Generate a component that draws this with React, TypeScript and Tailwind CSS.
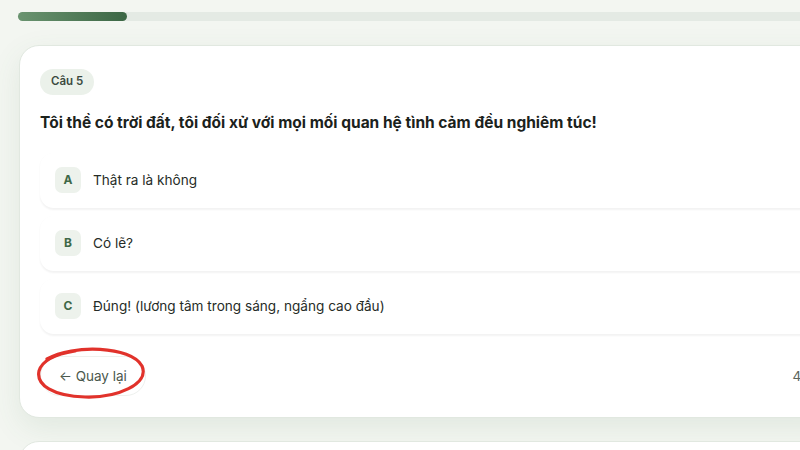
import React from "react";

const options = [
  { k: "A", t: "Thật ra là không" },
  { k: "B", t: "Có lẽ?" },
  { k: "C", t: "Đúng! (lương tâm trong sáng, ngẩng cao đầu)" },
];

export default function App() {
  return (
    <div
      className="relative w-[800px] h-[450px] overflow-hidden bg-[#f3f6f1]"
      style={{ fontFamily: "Inter, 'Noto Sans', 'Liberation Sans', sans-serif" }}
    >
      <div className="pl-[18px] pt-[12px]">
        <div className="h-[9px] w-[900px] rounded-full bg-[#e4eae4]">
          <div className="h-full w-[109px] rounded-full bg-gradient-to-r from-[#6a9470] to-[#3c6745]" />
        </div>
      </div>

      <div className="ml-[19px] mt-[24px] w-[822px] rounded-[20px] border border-[#e1e8e0] bg-white pt-[21px] px-[20px] pb-[21px] shadow-[0_10px_30px_rgba(70,120,80,0.1)]">
        <div className="inline-flex h-[26px] items-center rounded-full bg-[#ebf1ea] px-[11px] text-[11.5px] font-semibold text-[#3b4a3f]">
          Câu 5
        </div>
        <div className="mt-[16px] text-[15.5px] leading-[24px] font-bold text-[#1b221c]">
          Tôi thề có trời đất, tôi đối xử với mọi mối quan hệ tình cảm đều nghiêm túc!
        </div>
        <div className="mt-[18px] flex flex-col gap-[8px]">
          {options.map((o) => (
            <div
              key={o.k}
              className="flex h-[55px] items-center gap-[12px] rounded-[14px] bg-white px-[15px] shadow-[0_1.5px_2px_rgba(0,0,0,0.05)]"
            >
              <div className="flex h-[26px] w-[26px] items-center justify-center rounded-[7px] bg-[#edf2ec] text-[12px] font-bold text-[#3e6847]">
                {o.k}
              </div>
              <div className="text-[13.6px] text-[#262c27]">{o.t}</div>
            </div>
          ))}
        </div>
        <div className="mt-[22px] flex items-center justify-between">
          <div className="relative">
            <div className="flex h-[40px] items-center rounded-full border border-[#eef1ee] bg-white px-[18px] text-[13.5px] text-[#4a584d]">
              ← Quay lại
            </div>
            <svg
              className="absolute left-[-5px] top-[-11px] pointer-events-none"
              width="112"
              height="56"
              viewBox="0 0 112 56"
              fill="none"
            >
              <path
                d="M12 14 C38 -1, 96 1, 107 21 C115 39, 82 53, 50 52 C18 51, 1 40, 4 26 C7 15, 22 9, 40 6"
                stroke="#e1322b"
                strokeWidth="3.2"
                strokeLinecap="round"
              />
              <path
                d="M10 17 C20 10, 30 7, 44 5"
                stroke="#e1322b"
                strokeWidth="1.6"
                strokeLinecap="round"
              />
            </svg>
          </div>
          <div className="text-[13.5px] text-[#5b655d]">4/10</div>
        </div>
      </div>

      <div className="ml-[19px] mt-[23px] h-[100px] w-[822px] rounded-[20px] border border-[#e1e8e0] bg-white" />
    </div>
  );
}
